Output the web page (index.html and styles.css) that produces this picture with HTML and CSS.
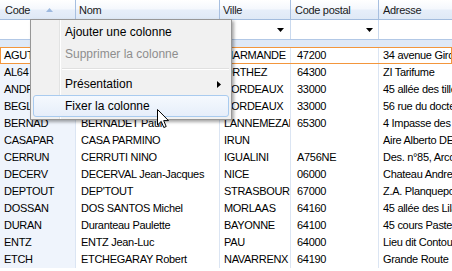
FILE: index.html
```html
<!DOCTYPE html>
<html lang="fr">
<head>
    <meta charset="UTF-8">
    <title>Liste des clients</title>
    <link rel="stylesheet" href="styles.css">
</head>
<body>
    <div class="grid">
        <div class="head">
            <div class="hcell c-code">Code
                <svg class="sort" width="7" height="4" viewBox="0 0 7 4"><polygon points="0,4 3.5,0 7,4" fill="#9db9df"/></svg>
            </div>
            <div class="hcell c-nom">Nom</div>
            <div class="hcell c-ville">Ville</div>
            <div class="hcell c-cp">Code postal</div>
            <div class="hcell c-adr">Adresse</div>
        </div>
        <div class="filters">
            <div class="fcell c-code"><svg width="7" height="4" viewBox="0 0 7 4"><polygon points="0,0 7,0 3.5,4" fill="#000"/></svg></div>
            <div class="fcell c-nom"><svg width="7" height="4" viewBox="0 0 7 4"><polygon points="0,0 7,0 3.5,4" fill="#000"/></svg></div>
            <div class="fcell c-ville"><svg width="7" height="4" viewBox="0 0 7 4"><polygon points="0,0 7,0 3.5,4" fill="#000"/></svg></div>
            <div class="fcell c-cp"><svg width="7" height="4" viewBox="0 0 7 4"><polygon points="0,0 7,0 3.5,4" fill="#000"/></svg></div>
            <div class="fcell c-adr"></div>
        </div>
        <div class="band"></div>

        <div class="rows">
            <div class="row sel"><div class="cell c-code">AGUTTE</div><div class="cell c-nom">AGUTTE Jean</div><div class="cell c-ville">MARMANDE</div><div class="cell c-cp">47200</div><div class="cell c-adr">34 avenue Gironde</div></div>
            <div class="row"><div class="cell c-code">AL64</div><div class="cell c-nom">AL 64 Services</div><div class="cell c-ville">ORTHEZ</div><div class="cell c-cp">64300</div><div class="cell c-adr">ZI Tarifume</div></div>
            <div class="row"><div class="cell c-code">ANDRE</div><div class="cell c-nom">ANDRE Pierre</div><div class="cell c-ville">BORDEAUX</div><div class="cell c-cp">33000</div><div class="cell c-adr">45 allée des tilleuls</div></div>
            <div class="row"><div class="cell c-code">BEGLE</div><div class="cell c-nom">BEGLE Marc</div><div class="cell c-ville">BORDEAUX</div><div class="cell c-cp">33000</div><div class="cell c-adr">56 rue du docteur</div></div>
            <div class="row"><div class="cell c-code">BERNAD</div><div class="cell c-nom">BERNADET Paul</div><div class="cell c-ville">LANNEMEZAN</div><div class="cell c-cp">65300</div><div class="cell c-adr">4 Impasse des Lilas</div></div>
            <div class="row"><div class="cell c-code">CASAPAR</div><div class="cell c-nom">CASA PARMINO</div><div class="cell c-ville">IRUN</div><div class="cell c-cp"></div><div class="cell c-adr">Aire Alberto DE</div></div>
            <div class="row"><div class="cell c-code">CERRUN</div><div class="cell c-nom">CERRUTI NINO</div><div class="cell c-ville">IGUALINI</div><div class="cell c-cp">A756NE</div><div class="cell c-adr">Des. n°85, Arco</div></div>
            <div class="row"><div class="cell c-code">DECERV</div><div class="cell c-nom">DECERVAL Jean-Jacques</div><div class="cell c-ville">NICE</div><div class="cell c-cp">06000</div><div class="cell c-adr">Chateau Andre</div></div>
            <div class="row"><div class="cell c-code">DEPTOUT</div><div class="cell c-nom">DEP'TOUT</div><div class="cell c-ville">STRASBOURG</div><div class="cell c-cp">67000</div><div class="cell c-adr">Z.A. Planquepo</div></div>
            <div class="row"><div class="cell c-code">DOSSAN</div><div class="cell c-nom">DOS SANTOS Michel</div><div class="cell c-ville">MORLAAS</div><div class="cell c-cp">64160</div><div class="cell c-adr">45 allée des Lilas</div></div>
            <div class="row"><div class="cell c-code">DURAN</div><div class="cell c-nom">Duranteau Paulette</div><div class="cell c-ville">BAYONNE</div><div class="cell c-cp">64100</div><div class="cell c-adr">45 cours Pasteur</div></div>
            <div class="row"><div class="cell c-code">ENTZ</div><div class="cell c-nom">ENTZ Jean-Luc</div><div class="cell c-ville">PAU</div><div class="cell c-cp">64000</div><div class="cell c-adr">Lieu dit Contour</div></div>
            <div class="row"><div class="cell c-code">ETCH</div><div class="cell c-nom">ETCHEGARAY Robert</div><div class="cell c-ville">NAVARRENX</div><div class="cell c-cp">64190</div><div class="cell c-adr">Grande Route</div></div>
        </div>

        <!-- column context menu -->
        <div class="menu">
            <div class="mi">Ajouter une colonne</div>
            <div class="mi disabled">Supprimer la colonne</div>
            <div class="sep"></div>
            <div class="mi">Présentation
                <svg class="sub" width="4" height="7" viewBox="0 0 4 7"><polygon points="0,0 4,3.5 0,7" fill="#000"/></svg>
            </div>
            <div class="mi hover">Fixer la colonne</div>
        </div>

        <svg class="cursor" width="13" height="20" viewBox="0 0 13 20">
            <path d="M0.5 0.5 L0.5 16 L4.2 12.4 L6.8 18.5 L9.2 17.5 L6.7 11.6 L11.5 11.6 Z" fill="#fff" stroke="#000" stroke-width="1" stroke-linejoin="miter"/>
        </svg>
    </div>
</body>
</html>
```

FILE: styles.css
```css
body {
    margin: 0;
    font-family: "Liberation Sans", Arial, sans-serif;
    background: #fff;
    color: #000;
}
.grid {
    position: relative;
    width: 452px;
    height: 271px;
    overflow: hidden;
}

/* column widths, shared by every row */
.c-code { width: 76px; flex: none; }
.c-nom { width: 144px; flex: none; }
.c-ville { width: 71px; flex: none; }
.c-cp { width: 88px; flex: none; }
.c-adr { flex: 1; min-width: 0; }

.head {
    display: flex;
    height: 19px;
    border-bottom: 1px solid #a3bcdd;
    background: linear-gradient(#ffffff 0%, #f5f8fd 45%, #e6eef9 55%, #dfe9f6 100%);
}
.hcell {
    box-sizing: border-box;
    display: flex;
    align-items: center;
    padding-left: 4px;
    border-right: 1px solid #a7bfe0;
    font-size: 11px;
    letter-spacing: -0.3px;
    color: #1a1a1a;
    white-space: nowrap;
}
.hcell.c-code { padding-left: 5px; }
.hcell.c-nom { padding-left: 3px; }
.hcell.c-ville { padding-left: 3px; }
.hcell.c-adr { border-right: none; }
.sort {
    margin-left: auto;
    margin-right: 22px;
}

.filters {
    display: flex;
    height: 19px;
    background: #fff;
}
.fcell {
    box-sizing: border-box;
    display: flex;
    align-items: center;
    justify-content: flex-end;
    padding-right: 6px;
    border-right: 1px solid #c9d9ee;
}
.fcell.c-cp { padding-right: 5px; }
.fcell.c-adr { border-right: none; }

.band {
    height: 7px;
    border-top: 1px solid #b2c8e6;
    background: #dfe9f7;
}

.row {
    display: flex;
    height: 17px;
}
.row.sel {
    outline: 1px solid #f3963c;
    outline-offset: -1px;
}
.cell {
    box-sizing: border-box;
    height: 17px;
    line-height: 17px;
    font-size: 11px;
    letter-spacing: -0.3px;
    white-space: nowrap;
    overflow: hidden;
    border-right: 1px solid #dbe5f3;
    padding-left: 5px;
}
.cell.c-code {
    padding-left: 4px;
    background: #eff4fc;
}
.row.sel .cell.c-code { background: #fff; }
.cell.c-ville { padding-left: 4px; }
.cell.c-cp { padding-left: 6px; }
.cell.c-adr {
    padding-left: 4px;
    border-right: none;
}

.menu {
    position: absolute;
    left: 30px;
    top: 19px;
    width: 202px;
    box-sizing: border-box;
    padding: 1px 2px 2px;
    border: 1px solid #979797;
    background: linear-gradient(to right, #f1f1f1 28px, #e2e3e3 28px, #e2e3e3 29px, #fff 29px, #fff 30px, #f1f1f1 30px);
    box-shadow: 2px 2px 3px rgba(0, 0, 0, 0.35);
    font-size: 12px;
    color: #000;
}
.mi {
    display: flex;
    align-items: center;
    height: 22px;
    box-sizing: border-box;
    padding-left: 32px;
    white-space: nowrap;
}
.mi.disabled { color: #8e8e8e; }
.mi.hover {
    padding-left: 31px;
    border: 1px solid #a9cbef;
    border-radius: 3px;
    background: linear-gradient(#f5f9fe, #e6eefa);
}
.sub {
    margin-left: auto;
    margin-right: 8px;
}
.sep {
    height: 0;
    margin: 3px 0 3px 29px;
    border-top: 1px solid #e0e0e0;
    border-bottom: 1px solid #fff;
}

.cursor {
    position: absolute;
    left: 157px;
    top: 109px;
}
```
